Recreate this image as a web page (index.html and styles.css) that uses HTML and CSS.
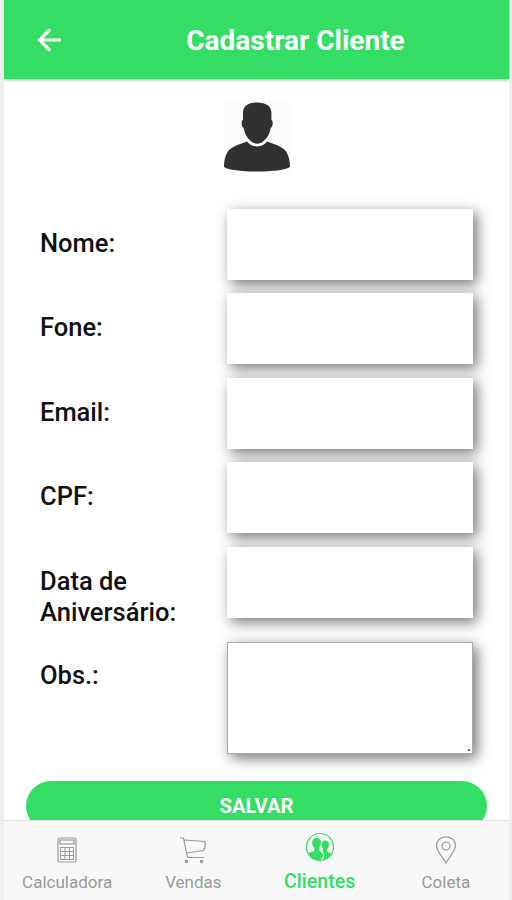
FILE: index.html
```html
<!DOCTYPE html>
<html lang="pt-br">
<head>
    <meta charset="UTF-8">
    <meta name="viewport" content="width=device-width, initial-scale=1.0">
    <title>Cadastrar Cliente</title>

    <link rel="stylesheet" href="styles.css">
</head>
<body>

    <div class="app">
        <header class="toolbar">
            <button class="backBtn" type="button" aria-label="Voltar">
                <svg width="24" height="24" viewBox="0 0 24 24">
                    <path d="M22.500 12H3M12 2.500L2.500 12l9.500 9.500" />
                </svg>
            </button>
            <h1>Cadastrar Cliente</h1>
        </header>

        <main class="content">
            <svg class="avatar" width="68" height="72" viewBox="0 0 68 72">
                <rect width="68" height="72" fill="#fcfcfc" />
                <path d="M34 1.500C25 1.500 20 5 20 12v7c-2 .5-1.700 7 .7 8 1 6 3.500 10 7 13 4 3.500 9 3.500 13 0 3.500-3 6-7 7-13 2.400-1 2.700-7.500.7-8v-7C48.400 5 43 1.500 34 1.500z" />
                <path d="M24 40.500C14 44 8 46 4.500 51 2 55 1 60 1 66c8 6 58 6 66 0 0-6-1.300-11-3.500-15-3.500-5-9.500-7-19.500-10.500-5 6.500-15 6.500-20 0z" />
            </svg>

            <form id="clienteForm">
                <div class="row">
                    <label for="nome">Nome:</label>
                    <input type="text" id="nome" name="nome">
                </div>
                <div class="row">
                    <label for="fone">Fone:</label>
                    <input type="text" id="fone" name="fone">
                </div>
                <div class="row">
                    <label for="email">Email:</label>
                    <input type="text" id="email" name="email">
                </div>
                <div class="row">
                    <label for="cpf">CPF:</label>
                    <input type="text" id="cpf" name="cpf">
                </div>
                <div class="row rowData">
                    <label for="data">Data de Aniversário:</label>
                    <input type="text" id="data" name="data">
                </div>
                <div class="row rowObs">
                    <label for="obs">Obs.:</label>
                    <div class="obsBox">
                        <textarea id="obs" name="obs"></textarea>
                        <span class="grip"></span>
                    </div>
                </div>
                <button class="salvarBtn" type="button">SALVAR</button>
            </form>
        </main>

        <nav class="tabs">
            <a class="tab">
                <svg width="28" height="30" viewBox="0 0 28 30">
                    <rect x="5" y="3" width="18" height="24" rx="1.500" />
                    <rect x="7" y="5" width="14" height="4" />
                    <path d="M7 12.500h14M7 16.500h14M7 20.500h14M7 24.500h14M7.500 12v12.500M12 12v12.500M16.500 12v12.500M20.500 12v12.500" stroke-width="1" />
                </svg>
                <span>Calculadora</span>
            </a>
            <a class="tab">
                <svg width="28" height="30" viewBox="0 0 28 30">
                    <path d="M1 3h3.500l4 19.500h16.500M5.500 5l20.500 1.500c.6 3 .3 6-1.500 9L8 18" />
                    <circle cx="7.500" cy="26.500" r="1.200" class="wheel" />
                    <circle cx="22.500" cy="26.500" r="1.200" class="wheel" />
                </svg>
                <span>Vendas</span>
            </a>
            <a class="tab active">
                <svg width="30" height="30" viewBox="0 0 30 30">
                    <circle cx="15" cy="15" r="13.500" />
                    <path class="people" d="M3 21.500c2-1.500 5-1.500 6.300-3v-2.500C7.800 14.500 7.200 12.500 7.200 10.500 7.200 7.500 9 6 11.500 6S16 7.500 16 10.500c0 2-.7 4-2 5.500v2.500c1.500 1.500 3.500 2 4 4 0 2-1 4-2.500 6C9.500 28.500 5 26 3 21.500z" />
                    <path class="people" d="M17.500 28c1.500-2 2-4 1.700-6-.4-1.500-1.500-2.500-2.700-3.300 1.300-.4 1.700-.7 1.700-1.700-1-1-1.700-2.500-1.700-4.500 0-2.500 1.500-4 3.700-4s3.700 1.500 3.700 4c0 2-.7 3.700-2 5v2c1.200 1 3.300 1 5 2-1.500 3.500-5 6-9.400 6.500z" />
                </svg>
                <span>Clientes</span>
            </a>
            <a class="tab">
                <svg width="28" height="30" viewBox="0 0 28 30">
                    <path d="M14 28C11 22 4.500 16.500 4.500 10.500 4.500 5.500 8.500 1.800 14 1.800s9.500 3.700 9.500 8.700C23.500 16.500 17 22 14 28z" />
                    <circle cx="14" cy="11" r="4" />
                </svg>
                <span>Coleta</span>
            </a>
        </nav>
    </div>

</body>
</html>
```

FILE: styles.css
```css
* {
    box-sizing: border-box;
}

body {
    margin: 0;
    background-color: #eeeeee;
    font-family: Roboto, "Liberation Sans", sans-serif;
}

.app {
    display: flex;
    flex-direction: column;
    height: 900px;
    margin: 0 3px 0 4px;
    background-color: white;
    overflow: hidden;
}

/* Top bar */
.toolbar {
    display: grid;
    grid-template-columns: 90px 1fr 12px;
    align-items: center;
    flex: none;
    height: 79px;
    background-color: #34dd64;
    box-shadow: 0 1px 3px rgba(0, 0, 0, 0.3);
    color: white;
    z-index: 1;
}

.toolbar h1 {
    margin: 1px 0 0;
    font-size: 28px;
    font-weight: 700;
    text-align: center;
}

.backBtn {
    display: flex;
    padding: 0 0 0 33px;
    border: none;
    background: none;
    cursor: pointer;
}

.backBtn svg {
    fill: none;
    stroke: white;
    stroke-width: 3.2;
    stroke-linecap: round;
}

/* Form */
.content {
    flex: 1;
    min-height: 0;
    overflow: hidden;
}

.avatar {
    display: block;
    margin: 22px 0 36px 218.5px;
    fill: #303030;
}

.row {
    display: grid;
    grid-template-columns: 187px 246px;
    align-items: start;
    height: 84.4px;
    padding-left: 36px;
}

.row label {
    width: 150px;
    padding-top: 19px;
    color: #111111;
    font-size: 25.5px;
    font-weight: 500;
    line-height: 31px;
}

.row input {
    height: 71px;
    border: none;
    background-color: white;
    box-shadow: 4px 4px 13px rgba(0, 0, 0, 0.55);
}

.rowData {
    height: 95.4px;
}

.rowObs {
    height: 139px;
}

.rowObs label {
    padding-top: 18px;
}

.obsBox {
    position: relative;
    height: 112px;
}

.obsBox textarea {
    display: block;
    width: 100%;
    height: 100%;
    border: 1px solid #aaaaaa;
    box-shadow: 4px 4px 13px rgba(0, 0, 0, 0.55);
    resize: none;
}

/* Small resize mark in the corner */
.grip {
    position: absolute;
    right: 3px;
    bottom: 3px;
    width: 2px;
    height: 2px;
    background-color: #666666;
}

.salvarBtn {
    display: block;
    width: 461px;
    height: 50px;
    margin-left: 22px;
    border: none;
    border-radius: 25px;
    background-color: #34dd64;
    color: white;
    font-family: inherit;
    font-size: 20.2px;
    font-weight: 700;
    cursor: pointer;
}

/* Bottom tabs */
.tabs {
    display: grid;
    grid-template-columns: repeat(4, 1fr);
    flex: none;
    height: 80px;
    border-top: 1px solid #e2e2e2;
    background-color: #f8f8f8;
}

.tab {
    display: flex;
    flex-direction: column;
    align-items: center;
    padding-top: 14px;
    color: #999999;
    font-size: 17px;
    line-height: 24px;
}

.tab svg {
    margin-bottom: 5px;
    fill: none;
    stroke: #999999;
    stroke-width: 1.2;
}

.tab .wheel {
    fill: #999999;
}

.active {
    padding-top: 11px;
    color: #34dd64;
    font-size: 19.6px;
    font-weight: 500;
}

.active svg {
    margin-bottom: 8px;
    stroke: #34dd64;
}

.active .people {
    fill: #34dd64;
    stroke: none;
}
```
